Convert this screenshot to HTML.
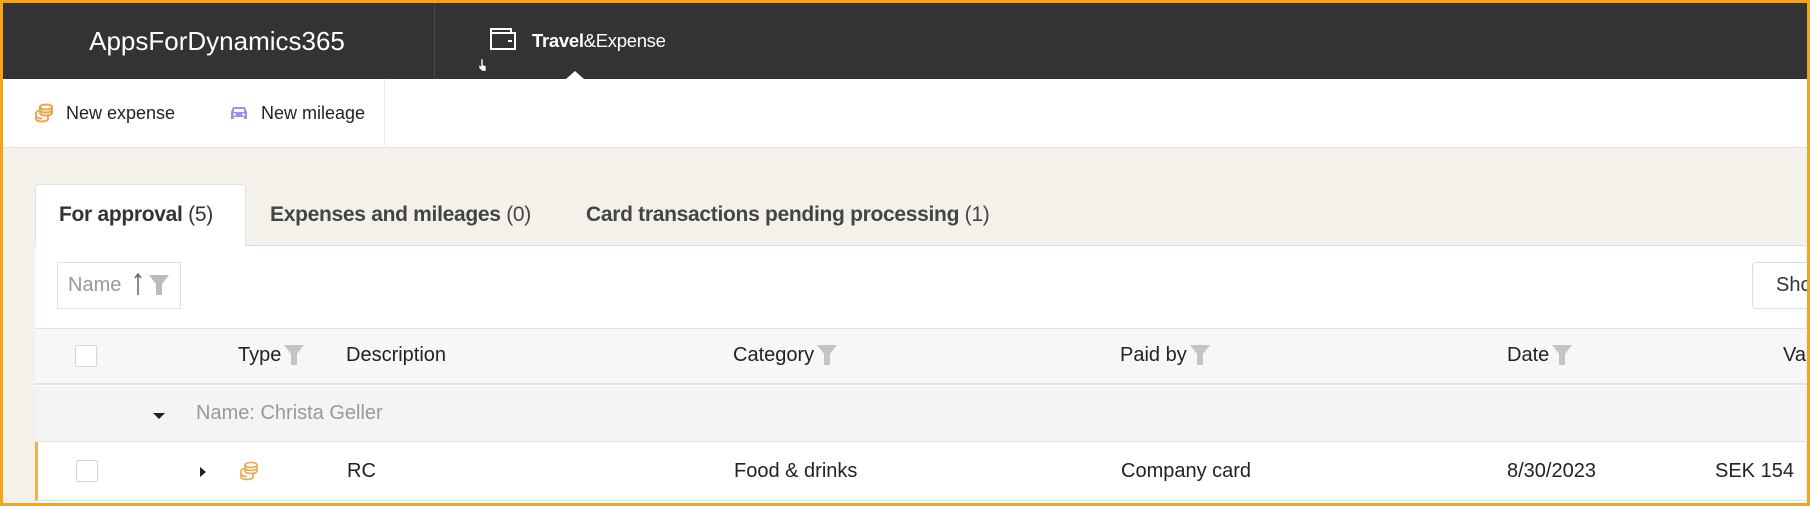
<!DOCTYPE html>
<html><head><meta charset="utf-8"><style>
*{margin:0;padding:0;box-sizing:border-box}
body{width:1810px;height:506px;overflow:hidden;font-family:"Liberation Sans",sans-serif;background:#f4f1eb;position:relative}
.frame{position:absolute;inset:0;border:3px solid #f5a31a;z-index:10;pointer-events:none}
.hdr{position:absolute;left:0;top:0;width:1810px;height:79px;background:#333335}
.abs{position:absolute;white-space:nowrap}
.tb{position:absolute;left:0;top:79px;width:1810px;height:69px;background:#fff;border-bottom:1px solid #e6e3dd}
.panel{position:absolute;left:35px;top:245px;width:1771px;height:261px;background:#fff;border-top:1px solid #ddd}
.th{position:absolute;left:35px;top:328px;width:1771px;height:57px;background:#f7f7f7;border-top:1px solid #e2e2e2;border-bottom:2px solid #e2e2e2}
.gr{position:absolute;left:35px;top:386px;width:1771px;height:56px;background:#f4f4f4;border-bottom:1px solid #e2e2e2}
.row{position:absolute;left:35px;top:442px;width:1771px;height:59px;background:#fff;border-left:3px solid #f0b04a;border-bottom:1px solid #e2e2e2}
.cb{position:absolute;width:22px;height:22px;border:1px solid #d6d6d6;background:#fff;border-radius:2px}
.c{font-size:20px;color:#222;display:flex;align-items:center;gap:3px}
.c svg{margin-top:-2px}
</style></head><body>
<div class="frame"></div>
<div class="hdr">
 <div class="abs" style="left:0;width:434px;text-align:center;top:26px;color:#fff;font-size:26px">AppsForDynamics365</div>
 <div class="abs" style="left:434px;top:3px;width:1px;height:76px;background:#4a4a4d"></div>
 <svg class="abs" style="left:490px;top:28px" width="26" height="22" viewBox="0 0 26 22"><path d="M1 3V21H25V5H1M1 3V1H21V5" fill="none" stroke="#fff" stroke-width="2"/><rect x="18" y="12" width="4" height="2" fill="#fff"/></svg>
 <div class="abs" style="left:532px;top:30px;color:#fff;font-size:18.5px;letter-spacing:-0.3px"><b>Travel</b>&amp;Expense</div>
 <div class="abs" style="left:566px;top:71px;width:0;height:0;border-left:9px solid transparent;border-right:9px solid transparent;border-bottom:8px solid #fff"></div>
 <svg class="abs" style="left:478px;top:58px" width="9" height="14" viewBox="0 0 9 14"><path d="M3 1v7L1 7v3l3 3h4V8L5 7V1z" fill="#fff" stroke="#333" stroke-width=".6"/></svg>
</div>
<div class="tb">
 <svg class="abs" style="left:34px;top:24px" width="20" height="20" viewBox="0 0 20 20" fill="none" stroke="#eba64a" stroke-width="2"><ellipse cx="12" cy="4" rx="6" ry="2.5"/><path d="M6 4v6c0 1.4 2.7 2.5 6 2.5s6-1.1 6-2.5V4M6 7c0 1.4 2.7 2.5 6 2.5s6-1.1 6-2.5"/><path d="M2 10v6c0 1.4 2.7 2.5 6 2.5s6-1.1 6-2.5v-3M2 10c0-1.3 2-2.3 4-2.5M2 13c0 1.4 2.7 2.5 6 2.5"/></svg>
 <div class="abs" style="left:66px;top:24px;font-size:18px;color:#222">New expense</div>
 <svg class="abs" style="left:229px;top:26px" width="20" height="16" viewBox="0 0 20 16"><path d="M4 2h12l2 5v7h-3v-2H5v2H2V7z" fill="#a58ae8"/><rect x="5" y="4" width="10" height="3" fill="#fff"/><circle cx="5.5" cy="9.5" r="1.3" fill="#fff"/><circle cx="14.5" cy="9.5" r="1.3" fill="#fff"/></svg>
 <div class="abs" style="left:261px;top:24px;font-size:18px;color:#222">New mileage</div>
 <div class="abs" style="left:384px;top:0;width:1px;height:69px;background:#eee"></div>
</div>
<div class="abs" style="left:35px;top:184px;width:211px;height:63px;background:#fff;border:1px solid #e4e1db;border-bottom:none;border-radius:4px 4px 0 0;z-index:2"></div>
<div class="abs" style="left:59px;top:203px;font-size:21px;color:#333;z-index:3;letter-spacing:-0.3px"><b>For approval</b> (5)</div>
<div class="abs" style="left:270px;top:203px;font-size:21px;color:#444;letter-spacing:-0.3px"><b>Expenses and mileages</b> (0)</div>
<div class="abs" style="left:586px;top:203px;font-size:21px;color:#444;letter-spacing:-0.3px"><b>Card transactions pending processing</b> (1)</div>
<div class="panel"></div>
<div class="abs" style="left:57px;top:262px;width:124px;height:47px;border:1px solid #e0e0e0;background:#fff"></div>
<div class="abs" style="left:68px;top:274px;font-size:20px;color:#999">Name</div>
<svg class="abs" style="left:134px;top:273px" width="8" height="22" viewBox="0 0 8 22"><path d="M4 1v21M1 5l3-4 3 4" fill="none" stroke="#666" stroke-width="1.5"/></svg>
<svg class="abs" style="left:149px;top:275px" width="20" height="20" viewBox="0 0 20 20"><path d="M0 0h20l-7 9v11h-6V9z" fill="#bbb"/></svg>
<div class="abs" style="left:1752px;top:262px;width:60px;height:47px;border:1px solid #ddd;border-radius:4px;background:#fff"></div>
<div class="abs" style="left:1776px;top:274px;font-size:20px;color:#333">Sho</div>
<div class="th"></div>
<div class="cb" style="left:75px;top:345px"></div>
<div class="abs c" style="left:238px;top:344px">Type<svg width="20" height="20" viewBox="0 0 20 20"><path d="M0 0h20l-7 9v11h-6V9z" fill="#c4c4c4"/></svg></div>
<div class="abs c" style="left:346px;top:344px">Description</div>
<div class="abs c" style="left:733px;top:344px">Category<svg width="20" height="20" viewBox="0 0 20 20"><path d="M0 0h20l-7 9v11h-6V9z" fill="#c4c4c4"/></svg></div>
<div class="abs c" style="left:1120px;top:344px">Paid by<svg width="20" height="20" viewBox="0 0 20 20"><path d="M0 0h20l-7 9v11h-6V9z" fill="#c4c4c4"/></svg></div>
<div class="abs c" style="left:1507px;top:344px">Date<svg width="20" height="20" viewBox="0 0 20 20"><path d="M0 0h20l-7 9v11h-6V9z" fill="#c4c4c4"/></svg></div>
<div class="abs c" style="left:1783px;top:344px">Va</div>
<div class="gr"></div>
<div class="abs" style="left:153px;top:413px;width:0;height:0;border-left:6px solid transparent;border-right:6px solid transparent;border-top:6px solid #222"></div>
<div class="abs" style="left:196px;top:402px;font-size:20px;color:#999">Name: Christa Geller</div>
<div class="row"></div>
<div class="cb" style="left:76px;top:460px"></div>
<div class="abs" style="left:200px;top:467px;width:0;height:0;border-top:5px solid transparent;border-bottom:5px solid transparent;border-left:6px solid #222"></div>
<svg class="abs" style="left:239px;top:461px" width="20" height="20" viewBox="0 0 20 20" fill="none" stroke="#eba64a" stroke-width="1.6"><ellipse cx="12" cy="4" rx="6" ry="2.5"/><path d="M6 4v6c0 1.4 2.7 2.5 6 2.5s6-1.1 6-2.5V4M6 7c0 1.4 2.7 2.5 6 2.5s6-1.1 6-2.5"/><path d="M2 10v6c0 1.4 2.7 2.5 6 2.5s6-1.1 6-2.5v-3M2 10c0-1.3 2-2.3 4-2.5M2 13c0 1.4 2.7 2.5 6 2.5"/></svg>
<div class="abs c" style="left:347px;top:460px">RC</div>
<div class="abs c" style="left:734px;top:460px">Food &amp; drinks</div>
<div class="abs c" style="left:1121px;top:460px">Company card</div>
<div class="abs c" style="left:1507px;top:460px">8/30/2023</div>
<div class="abs c" style="left:1715px;top:460px">SEK 154</div>
</body></html>
